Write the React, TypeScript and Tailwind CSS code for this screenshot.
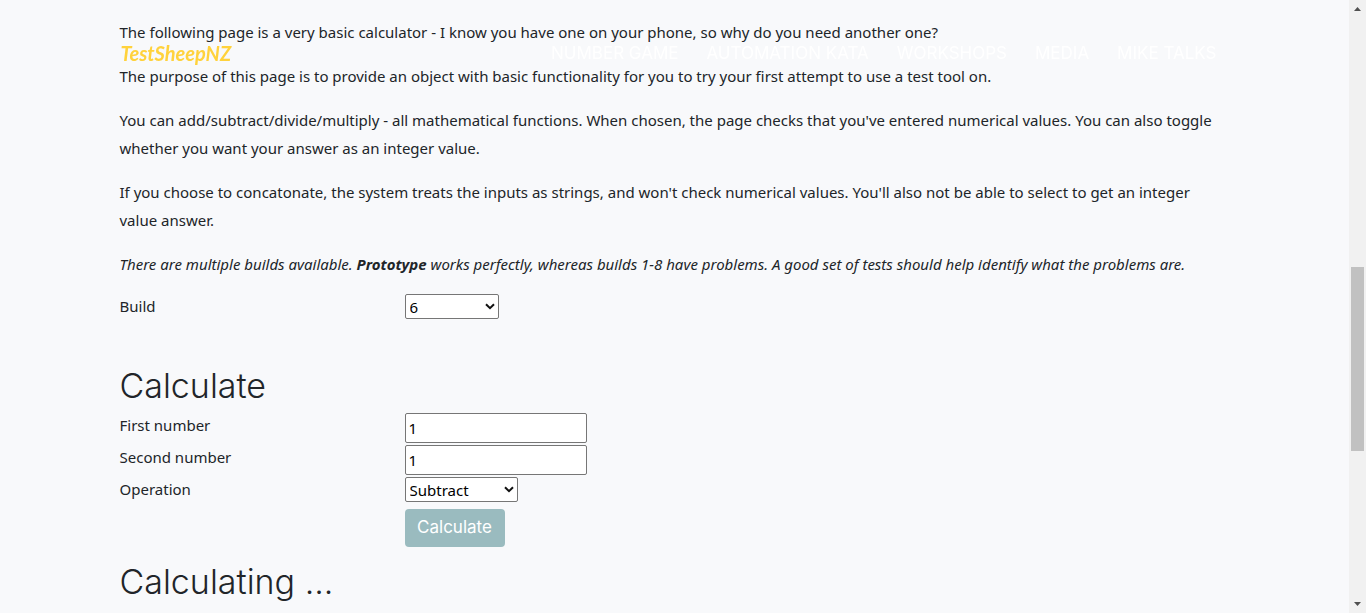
import type { ReactNode } from "react";

const navItems = ["Number Game", "Automation Kata", "Workshops", "Media", "Mike Talks"];
const builds = ["Prototype", "1", "2", "3", "4", "5", "6", "7", "8"];
const operations = ["Add", "Subtract", "Multiply", "Divide", "Concatenate"];

function Header() {
  return (
    <header className="fixed inset-x-0 top-0 pr-[17px]">
      <div className="mx-auto flex h-[106px] max-w-[1140px] items-center justify-between px-4">
        <a href="#top" className="font-['Lato'] text-[20px] leading-6 font-bold text-[#ffd23c] italic">
          TestSheepNZ
        </a>
        <nav className="flex gap-7 pr-3 font-['Inter'] text-[17px] leading-6 text-white uppercase">
          {navItems.map((item) => (
            <a key={item} href="#nav">
              {item}
            </a>
          ))}
        </nav>
      </div>
    </header>
  );
}

function Row({ label, id, children }: { label: string; id: string; children: ReactNode }) {
  return (
    <div className="grid grid-cols-[285px_minmax(0,1fr)] items-start">
      <label htmlFor={id} className="leading-6">
        {label}
      </label>
      <div className="flex">{children}</div>
    </div>
  );
}

function Select({ id, value, options, width }: { id: string; value: string; options: string[]; width: string }) {
  return (
    <div className={`relative ${width}`}>
      <select
        id={id}
        defaultValue={value}
        className="block h-[25px] w-full appearance-none rounded-[2px] border border-[#767676] bg-white pl-1 leading-5 text-black"
      >
        {options.map((o) => (
          <option key={o}>{o}</option>
        ))}
      </select>
      <svg viewBox="0 0 10 7" className="pointer-events-none absolute top-[9px] right-1 h-[7px] w-[10px]" aria-hidden="true">
        <path d="M1 1.2 L5 5.2 L9 1.2" fill="none" stroke="#111" strokeWidth="2" />
      </svg>
    </div>
  );
}

function NumberField({ id }: { id: string }) {
  return (
    <input
      id={id}
      type="text"
      defaultValue="1"
      className="h-[30px] w-[182px] rounded-[2px] border border-[#767676] bg-white px-[3px] text-black"
    />
  );
}

function ScrollRail() {
  return (
    <div className="sticky top-0 flex h-screen w-[17px] shrink-0 flex-col items-center bg-[#f1f1f1]" aria-hidden="true">
      <svg viewBox="0 0 17 17" className="h-[17px] w-[17px] shrink-0">
        <path d="M5 11 L8.5 7 L12 11 Z" fill="#505050" />
      </svg>
      <div className="grow-[250]" />
      <div className="w-[13px] grow-[184] bg-[#c1c1c1]" />
      <div className="grow-[145]" />
      <svg viewBox="0 0 17 17" className="h-[17px] w-[17px] shrink-0">
        <path d="M5 6 L8.5 10 L12 6 Z" fill="#505050" />
      </svg>
    </div>
  );
}

export default function App() {
  return (
    <div className="flex min-h-screen bg-[#f8f9fb] font-['Noto_Sans','Open_Sans',sans-serif] text-[15px] text-[#212529]">
      <main id="top" className="min-w-0 grow">
        <div className="mx-auto max-w-[1140px] px-[15px] pt-[18px]">
          <div className="space-y-4 pb-4 leading-7">
            <p>
              The following page is a very basic calculator - I know you have one on your phone, so why do you need
              another one?
            </p>
            <p>
              The purpose of this page is to provide an object with basic functionality for you to try your first
              attempt to use a test tool on.
            </p>
            <p>
              You can add/subtract/divide/multiply - all mathematical functions. When chosen, the page checks that
              you've entered numerical values. You can also toggle whether you want your answer as an integer value.
            </p>
            <p>
              If you choose to concatonate, the system treats the inputs as strings, and won't check numerical values.
              You'll also not be able to select to get an integer value answer.
            </p>
            <p className="italic">
              There are multiple builds available. <strong>Prototype</strong> works perfectly, whereas builds 1-8 have
              problems. A good set of tests should help identify what the problems are.
            </p>
          </div>
          <Row label="Build" id="build">
            <Select id="build" value="6" options={builds} width="w-[94px]" />
          </Row>
          <form className="pt-12" onSubmit={(e) => e.preventDefault()}>
            <h2 className="mb-2 font-['Inter'] text-[34px] leading-[38px] font-light">Calculate</h2>
            <div className="space-y-[2px]">
              <Row label="First number" id="first">
                <NumberField id="first" />
              </Row>
              <Row label="Second number" id="second">
                <NumberField id="second" />
              </Row>
              <Row label="Operation" id="operation">
                <Select id="operation" value="Subtract" options={operations} width="w-[113px]" />
              </Row>
            </div>
            <div className="grid grid-cols-[285px_minmax(0,1fr)] pt-[7px]">
              <button
                type="submit"
                className="col-start-2 h-[38px] w-[100px] rounded bg-[#9abbbf] font-['Inter'] text-[17px] text-white"
              >
                Calculate
              </button>
            </div>
          </form>
          <h2 className="mt-4 font-['Inter'] text-[34px] leading-[38px] font-light">Calculating ...</h2>
        </div>
      </main>
      <ScrollRail />
      <Header />
    </div>
  );
}
